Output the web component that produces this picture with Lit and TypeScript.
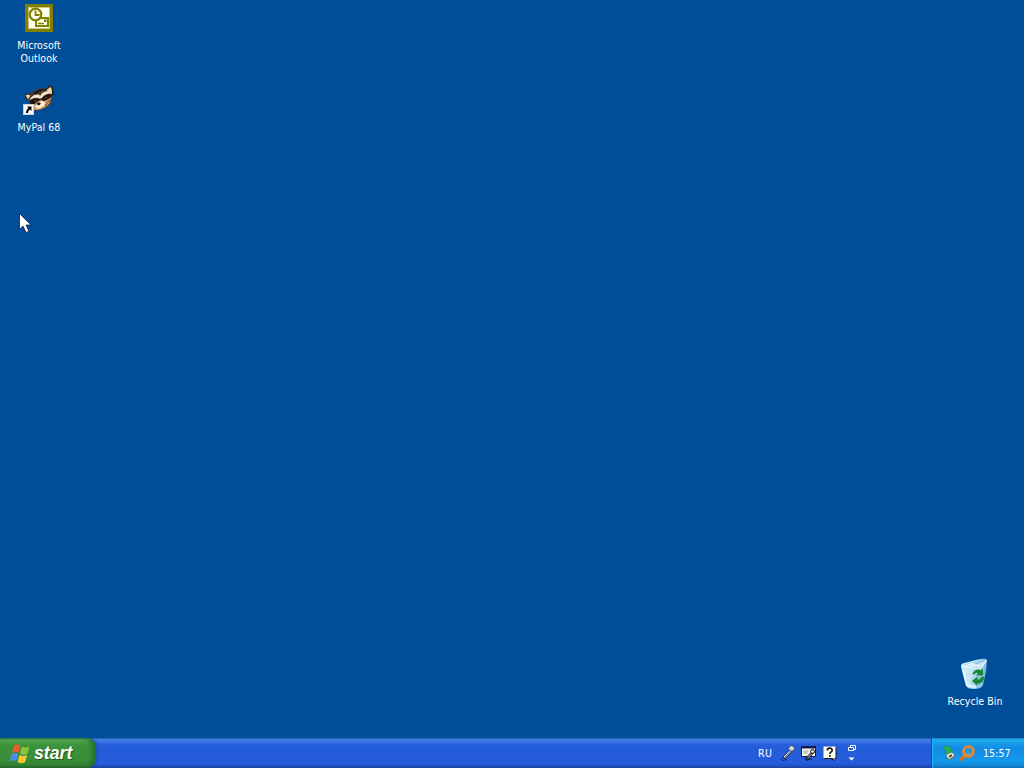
import { LitElement, html, svg, css } from "lit";
import { customElement, property } from "lit/decorators.js";
import { styleMap } from "lit/directives/style-map.js";

const outlook = svg`
  <rect x="2" y="2" width="28" height="28" fill="#827f00" />
  <rect x="5.5" y="5.5" width="21" height="21" fill="#fffff0" stroke="#c9c777" />
  <rect x="13" y="16" width="12" height="8" fill="#fffff0" stroke="#827f00" stroke-width="2" />
  <circle cx="12.5" cy="12.5" r="5.8" fill="#fffff0" stroke="#827f00" stroke-width="2.2" />
  <path d="M12.5 8.500v4.500h4" fill="none" stroke="#827f00" stroke-width="1.8" />
  <path d="M15 21.5h6" stroke="#827f00" stroke-width="1.5" />
  <rect x="21" y="17.500" width="2.5" height="2.5" fill="#827f00" />
`;

const raccoon = svg`
  <path d="M1.500 11c1.500-2.500 5-2 7-.500l-1 5-4 .500z" fill="#3a2417" />
  <path d="M2.500 11.200l3.500-.700 1.800 1.800-2.800 3z" fill="#e9d3ae" />
  <path d="M6.500 13c1.500-5 6.500-8 12-8.500 5-.500 9 1.500 10.500 5.500 1.500 5-.500 10-5 13-4 3-9.500 4.500-13 3.500-3.500-1-6-8-4.500-13.500z" fill="#51382a" />
  <path d="M20.500 6.500l7.500-5.500c2.500 2.500 3.500 6.500 2.500 11l-3.500 1z" fill="#35241a" />
  <path d="M23.500 6l4-3c1.400 2 1.700 4.500 1.300 7l-2-.500z" fill="#f0d5ae" />
  <path d="M10 9c4-3.500 8-4.500 12-3.500-4 1-7 3-9.500 6z" fill="#211813" />
  <path d="M7 15.500c1-3 4-5 7-5 1.500 0 2.500.500 3.200 1.400 1-2.300 3.300-4.400 6.800-4.900 2 0 3.500 1 4 2.500-4 .200-7 1.500-9 4.500l-2.500.500c-2.500-1.500-6-1-9.500 1.500z" fill="#f5e5c9" />
  <path d="M6.500 17.500c2.500-3 7-3.800 9.800-2.500l.7 3-3 3.500-5 .5z" fill="#211511" />
  <path d="M18.500 15c1-3 4.500-4.800 8.300-4.500l.700 3-3 3-4.500 1z" fill="#211511" />
  <path d="M9 21c3-.5 4-3 6.500-4l2.800-.8c2 .7 4.200.8 6.200-.8l4-2.200c-.500 4.300-2.500 7.500-6 9.800-4 2.800-9 3.800-11.500 2.500z" fill="#c69968" />
  <path d="M11.500 22.500c2-.5 2.500-3.700 5.500-5 2.500-.8 4.500.200 5.500 2-1.500 3-4.500 4.800-8 5.200z" fill="#fff0d5" />
  <path d="M13.500 19.500c1-1.200 3.300-1.500 4.300-.6-.200 1.600-1.300 2.400-2.800 2.400z" fill="#20110e" />
  <path d="M12 17h1M22.500 13.500h1" stroke="#d09350" />
  <path d="M24.500 18c1.800-.5 3-1.800 3.800-3.300M22 21l2.500-1.500" fill="none" stroke="#5f351f" />
`;

const shortcut = svg`
  <rect x=".500" y="20.500" width="10" height="10" fill="#fff" stroke="#c8ced5" />
  <path d="M4 22.500h4.500v4.500l-1.400-1.400c-1.500 1.100-2 2-2.100 3.400h-2c0-2 .8-3.500 2.500-4.900z" fill="#000" />
`;

const recycleBin = svg`
  <defs>
    <linearGradient id="bin" x2="1" y2=".300">
      <stop stop-color="#d9f1fd" />
      <stop offset=".500" stop-color="#c3e3f5" />
      <stop offset="1" stop-color="#70b2e1" />
    </linearGradient>
  </defs>
  <path d="M2 8.500c0-2 1-3 3-3.500l6-1.500 8-2c4-1 8-1 9 .500l-1 12-3 13c-1 3-5 4-9 4-4 0-7-1-8-3z" fill="url(#bin)" />
  <path d="M3 7.500l9-3 8-.500 7-2-5 7.500-5 1.500-8-2z" fill="#94c9e8" />
  <path d="M5 7.500l8-3 5 2 8-3-4 5-5 1z" fill="#d9effb" />
  <path d="M2.500 7.500l7 1.500 8 2 5-1.500 5-7.500" fill="none" stroke="#f2fbff" stroke-width="1.200" />
  <path d="M24 10l-1.500 17-4 2.500" fill="none" stroke="#add7ef" />
  <path d="M4 12l4 14.500c3 2 6 2.300 9 2.300" fill="none" stroke="#edf9ff" stroke-width="1.800" />
  <g fill="#16882b">
    <path d="M13.500 16c1.500-4 5-5.500 8.500-3.500l2-2v7l-7-.2 2.300-2.200c-1.700-.8-3.200-.2-4 1.600z" />
    <path d="M25 18.500c.3 5-3 7.500-6.500 7l-.2 2-5.300-4.500 5.500-4.500v3c2 .2 3-.5 3.500-2.500z" />
  </g>
`;

const cursor = svg`
  <path d="M.500 .500v16l3.500-3.500 3 6.500 3-1.300-3-6.200h5z" fill="#fff" stroke="#10233d" stroke-width=".800" />
`;

const flag = svg`
  <path d="M4.500 2.500c2.300-1.500 4.300-1.200 6-.200L8.700 8.700c-2-1.200-4-1-6 .200z" fill="#ed5a2b" />
  <path d="M11.700 3.200c2.300 1.300 4.400 1.200 6.800-.200l-1.700 6.500c-2.400 1.400-4.600 1.400-6.800.200z" fill="#86c73e" />
  <path d="M2.200 10.100c2.200-1.300 4.200-1.300 6.100-.200l-1.700 6.400c-2-1.100-4-1-6.100.200z" fill="#4f8de9" />
  <path d="M9.500 10.900c2.300 1.200 4.500 1.200 6.900-.200l-1.700 6.400c-2.400 1.500-4.700 1.400-6.900.200z" fill="#fac632" />
`;

const microphone = svg`
  <path d="M3 12l6.500-7 2.500 2-7 7z" fill="#778197" stroke="#172752" stroke-width=".700" />
  <path d="M4 12l6-6" stroke="#dce2e8" />
  <circle cx="11.500" cy="3.500" r="2.800" fill="#c5c9ca" stroke="#30405f" stroke-width=".700" />
  <path d="M10 2.500l3 2M11 1.500l2.500 2" stroke="#f6f7f8" stroke-width=".800" />
  <path d="M3.500 12c-2 1-2.500 3.500-.500 3.500s2-2 4-.500" fill="none" stroke="#132654" />
`;

const writingPad = svg`
  <path d="M.500 1.500h14v10h-14z" fill="#f7f7f2" stroke="#101c45" />
  <path d="M0 1h15v2.500h-15z" fill="#101c45" />
  <path d="M2.500 6h5M2.500 8h4" stroke="#8f969f" />
  <path d="M5.500 12l5-5 1.700 1.700-5 5z" fill="#777975" stroke="#111" stroke-width=".700" />
  <circle cx="11.500" cy="6.500" r="2" fill="#d8d8d5" stroke="#171717" />
  <path d="M6 12.500c-2 1-1 3 .500 2.500s1.500-1.500 4-.500" fill="none" stroke="#111b36" stroke-width="1.300" />
`;

const help = svg`
  <path d="M2 2.500h12.500v11.500h-2l1 2-5-2h-6.500z" fill="#111936" />
  <path d="M1.500 1.500h12v11.500h-12z" fill="#ffffed" />
  <path d="M10 12l2.500 3v-3z" fill="#ffffed" />
  <path d="M5.300 5.500c0-3.200 4.900-3.200 4.900-.300 0 2-2.400 2-2.400 3.700" fill="none" stroke="#111" stroke-width="1.600" />
  <rect x="7" y="10" width="1.700" height="1.700" fill="#111" />
`;

const safelyRemove = svg`
  <path d="M1.500 2l6-1.500 1.500 5 2-.500-3 5.500-5.500-3 2-.500-1-2.500-2 .500z" fill="#2bb153" stroke="#168052" stroke-width=".400" />
  <path d="M3.500 10.500l6.500-3.500 3.500 4-6.500 4.500z" fill="#a3b2a9" stroke="#435f70" stroke-width=".800" />
  <path d="M4.500 10l5.500-2.500 2 2.500-5.500 3z" fill="#eef0dc" />
  <path d="M7 11.500l3-1.500" stroke="#26443e" stroke-width="1.500" />
`;

const magnifier = svg`
  <path d="M2 14.500l4-4" stroke="#d57222" stroke-width="3.200" stroke-linecap="round" />
  <circle cx="9.500" cy="6.500" r="5" fill="#2597e2" stroke="#ef8525" stroke-width="2.700" />
  <path d="M7 8a3 3 0 0 0 5 0" fill="none" stroke="#ffb04c" stroke-width=".700" />
`;

@customElement("desktop-icon")
export class DesktopIcon extends LitElement {
  @property() label = "";
  @property({ attribute: false }) art: unknown;

  static styles = css`
    :host {
      display: flex;
      flex-direction: column;
      align-items: center;
      width: 76px;
      color: #fff;
      font: 10.5px/13px "DejaVu Sans Condensed", "DejaVu Sans", sans-serif;
      text-align: center;
    }
    svg {
      width: 32px;
      height: 32px;
      margin-bottom: 5px;
    }
    span {
      white-space: pre-line;
      letter-spacing: 0.05px;
    }
  `;

  render() {
    return html`
      <svg viewBox="0 0 32 32">${this.art}</svg>
      <span>${this.label}</span>
    `;
  }
}

@customElement("xp-taskbar")
export class XpTaskbar extends LitElement {
  static styles = css`
    :host {
      display: flex;
      height: 30px;
      color: #fff;
      font: 10.5px/13px "DejaVu Sans Condensed", "DejaVu Sans", sans-serif;
      background: linear-gradient(
        #2460bd 0,
        #437fe4 2px,
        #3672e5 4px,
        #245edb 7px,
        #245cda 15px,
        #255ddd 25px,
        #1f50c4 28px,
        #193f9d 30px
      );
    }
    svg {
      display: block;
      width: 16px;
      height: 16px;
    }
    .start {
      display: flex;
      align-items: center;
      box-sizing: border-box;
      width: 96px;
      padding-left: 9px;
      gap: 4px;
      border-radius: 0 9px 9px 0;
      background: linear-gradient(
        #347b3b 0,
        #66ac66 2px,
        #489e48 4px,
        #3a923a 8px,
        #388f38 21px,
        #348634 27px,
        #246228 30px
      );
      box-shadow: inset -4px 0 5px #24702c, 1px 0 3px #194aa8;
    }
    .start svg {
      width: 21px;
      height: 21px;
    }
    .start span {
      font: italic bold 17.7px/20px "Liberation Sans", Arial, sans-serif;
      text-shadow: 1px 1px 1px #235524;
    }
    .language {
      display: flex;
      align-items: center;
      width: 100px;
      margin-left: auto;
      margin-right: 73px;
    }
    .language span {
      width: 22px;
      letter-spacing: 0.5px;
    }
    .language svg + svg {
      margin-left: 5px;
    }
    .language svg.controls {
      width: 9px;
      height: 18px;
      flex-shrink: 0;
      margin-left: 9px;
    }
    .tray {
      display: flex;
      align-items: center;
      box-sizing: border-box;
      width: 93px;
      padding-left: 10px;
      gap: 2px;
      border-left: 1px solid #14489f;
      background: linear-gradient(
        #137bc6 0,
        #20aeea 2px,
        #179ceb 5px,
        #128be3 11px,
        #139aef 23px,
        #1284d2 28px,
        #0d65ae 30px
      );
      box-shadow: inset 1px 0 1px #26bcf4;
    }
    .tray svg + svg {
      margin-left: -1px;
    }
    .tray span {
      margin-left: 6px;
      letter-spacing: 0.1px;
    }
  `;

  render() {
    return html`
      <div class="start">
        <svg viewBox="0 0 19 19">${flag}</svg>
        <span>start</span>
      </div>
      <div class="language">
        <span>RU</span>
        <svg viewBox="0 0 16 16">${microphone}</svg>
        <svg viewBox="0 0 16 16">${writingPad}</svg>
        <svg viewBox="0 0 16 16">${help}</svg>
        <svg class="controls" viewBox="0 0 9 18">
          <path d="M3.500 3v-1.500h5v4h-2M1.500 3.500h5v3h-5z" fill="none" stroke="#fff" />
          <path d="M1.500 13.500h6l-3 3z" fill="#fff" />
        </svg>
      </div>
      <div class="tray">
        <svg viewBox="0 0 16 16">${safelyRemove}</svg>
        <svg viewBox="0 0 16 16">${magnifier}</svg>
        <span>15:57</span>
      </div>
    `;
  }
}

@customElement("app-root")
export class AppRoot extends LitElement {
  icons = [
    { label: "Microsoft\nOutlook", art: outlook, x: 1, y: 2 },
    { label: "MyPal 68", art: [raccoon, shortcut], x: 1, y: 84 },
    { label: "Recycle Bin", art: recycleBin, x: 937, y: 658 },
  ];

  static styles = css`
    :host {
      display: flex;
      flex-direction: column;
      width: 1024px;
      height: 768px;
      overflow: hidden;
    }
    .desktop {
      position: relative;
      flex: 1;
      background: #004e98;
    }
    desktop-icon {
      position: absolute;
    }
    .cursor {
      position: absolute;
      left: 19px;
      top: 213px;
      width: 14px;
      height: 21px;
    }
  `;

  render() {
    return html`
      <div class="desktop">
        ${this.icons.map(
          ({ label, art, x, y }) => html`
            <desktop-icon
              style=${styleMap({ left: `${x}px`, top: `${y}px` })}
              .label=${label}
              .art=${art}
            ></desktop-icon>
          `
        )}
        <svg class="cursor" viewBox="0 0 14 21">${cursor}</svg>
      </div>
      <xp-taskbar></xp-taskbar>
    `;
  }
}
